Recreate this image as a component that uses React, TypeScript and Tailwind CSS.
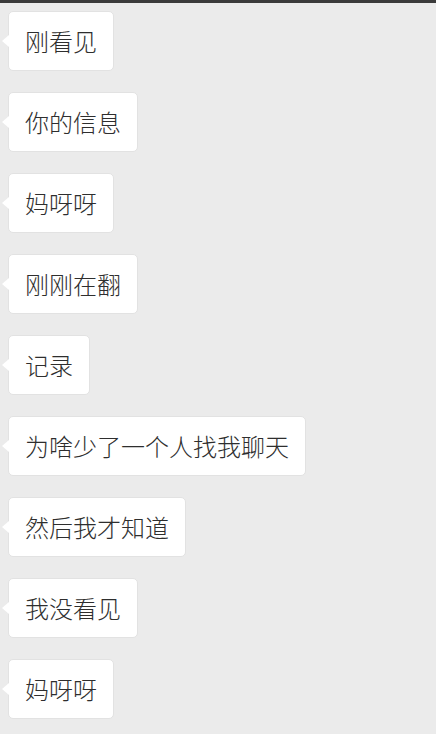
const messages = [
  '刚看见',
  '你的信息',
  '妈呀呀',
  '刚刚在翻',
  '记录',
  '为啥少了一个人找我聊天',
  '然后我才知道',
  '我没看见',
  '妈呀呀',
];

function Bubble({ text }: { text: string }) {
  return (
    <div className="relative self-start">
      {/* little pointer on the left edge */}
      <div className="absolute left-[-6px] top-[24px] h-0 w-0 border-y-[6px] border-r-[7px] border-y-transparent border-r-white" />
      <div className="flex h-[60px] items-center rounded-[5px] border border-[#e2e2e2] bg-white px-4 text-[24px] font-light leading-none text-[#2e2e2e]">
        {text}
      </div>
    </div>
  );
}

export default function App() {
  return (
    <div
      className="min-h-[734px] w-[436px] overflow-hidden bg-[#ebebeb]"
      style={{ fontFamily: '"Noto Sans CJK SC", "Noto Sans", sans-serif' }}
    >
      <div className="h-[3px] bg-[#3b3b3b]" />
      <div className="flex flex-col gap-[21px] pl-2 pt-[8px]">
        {messages.map((m, i) => (
          <Bubble key={i} text={m} />
        ))}
      </div>
    </div>
  );
}
